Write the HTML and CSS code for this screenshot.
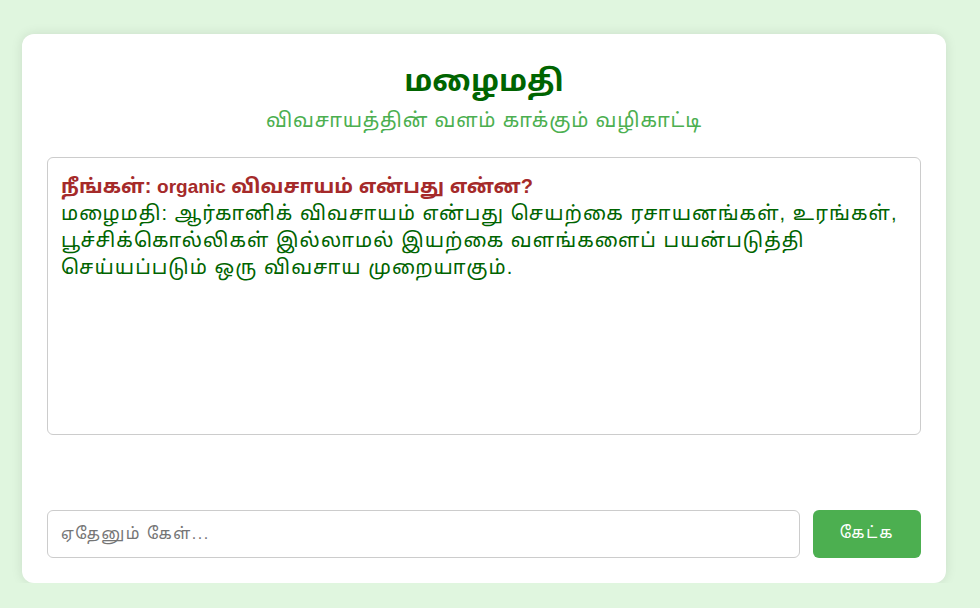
FILE: index.html
```html
<!DOCTYPE html>
<html lang="ta">
<head>
<meta charset="utf-8">
<link rel="stylesheet" href="styles.css">
</head>
<body>
<div class="card">
  <h1 class="title">மழைமதி</h1>
  <p class="subtitle">விவசாயத்தின் வளம் காக்கும் வழிகாட்டி</p>
  <div class="chat">
    <div class="q">நீங்கள்: <span class="latin">organic</span> விவசாயம் என்பது என்ன?</div>
    <div class="a">
      <span class="line">மழைமதி: ஆர்கானிக் விவசாயம் என்பது செயற்கை ரசாயனங்கள், உரங்கள்,</span>
      <span class="line">பூச்சிக்கொல்லிகள் இல்லாமல் இயற்கை வளங்களைப் பயன்படுத்தி</span>
      <span class="line">செய்யப்படும் ஒரு விவசாய முறையாகும்.</span>
    </div>
  </div>
  <div class="ask">
    <input class="field" type="text" placeholder="ஏதேனும் கேள்...">
    <button class="btn">கேட்க</button>
  </div>
</div>
</body>
</html>
```
FILE: styles.css
```css
html, body {
  margin: 0;
  background: #e0f6df;
  font-family: Arial, "Liberation Sans", "Noto Sans Tamil", sans-serif;
}
body {
  padding: 34px 34px 0 22px;
}
.card {
  background: #fff;
  border-radius: 12px;
  box-shadow: 0 0 12px rgba(0, 0, 0, 0.1);
  padding: 25px;
  width: 874px;
}
.title {
  margin: 0;
  text-align: center;
  color: #006400;
  font-size: 30px;
  line-height: 44px;
  font-weight: bold;
}
.subtitle {
  margin: 2px 0 0;
  text-align: center;
  color: #4caf50;
  font-size: 20px;
  line-height: 30px;
  letter-spacing: 0.8px;
}
.chat {
  margin-top: 22px;
  height: 278px;
  box-sizing: border-box;
  border: 1px solid #ccc;
  border-radius: 6px;
  padding: 15px 13px;
  font-size: 20px;
  line-height: 27px;
  overflow-y: auto;
}
.q {
  color: #a52a2a;
  font-weight: bold;
  letter-spacing: 0.1px;
}
.latin {
  font-size: 19px;
  letter-spacing: 0;
}
.a {
  color: #006400;
  letter-spacing: 1.05px;
}
.line {
  display: block;
  white-space: nowrap;
}
.ask {
  display: flex;
  gap: 13px;
  margin-top: 75px;
}
.field {
  flex: 1;
  height: 48px;
  box-sizing: border-box;
  border: 1px solid #ccc;
  border-radius: 6px;
  padding: 0 13px;
  font-size: 16px;
  letter-spacing: 1.5px;
  font-family: Arial, "Liberation Sans", "Noto Sans Tamil", sans-serif;
}
.field::placeholder {
  color: #757575;
}
.btn {
  width: 108px;
  height: 48px;
  border: none;
  border-radius: 6px;
  background: #4caf50;
  color: #fff;
  font-size: 16px;
  letter-spacing: 1.8px;
  font-family: Arial, "Liberation Sans", "Noto Sans Tamil", sans-serif;
}
```
